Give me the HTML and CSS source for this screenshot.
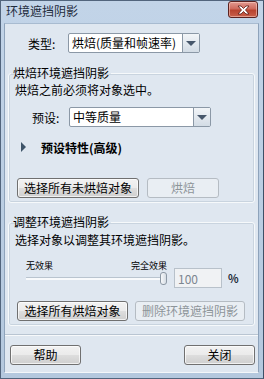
FILE: index.html
```html
<!DOCTYPE html>
<html lang="zh-CN">
  <head>
    <meta charset="UTF-8" />
    <meta name="viewport" content="width=device-width, initial-scale=1.0" />
    <title>环境遮挡阴影</title>

    <link rel="stylesheet" href="styles.css">
  </head>
  <body>
    <div class="window">
      <div class="titlebar">
        <span class="title">环境遮挡阴影</span>
        <button class="close-btn" aria-label="关闭">
          <svg width="15" height="10" viewBox="0 0 15 10">
            <path d="M2 1 L5 1 L7.5 3.5 L10 1 L13 1 L9.5 5 L13 9 L10 9 L7.5 6.5 L5 9 L2 9 L5.5 5 Z"
                  fill="#fff" stroke="#5b1a14" stroke-width="0.8" stroke-linejoin="round" />
          </svg>
        </button>
      </div>

      <div class="content">
        <div class="type-row">
          <label class="type-label">类型:</label>
          <div class="combo type-combo">
            <span class="combo-text">烘焙(质量和帧速率)</span>
            <span class="combo-arrow"><span class="tri"></span></span>
          </div>
        </div>

        <fieldset class="group bake-group">
          <legend>烘焙环境遮挡阴影</legend>
          <div class="note">烘焙之前必须将对象选中。</div>

          <div class="preset-row">
            <label class="preset-label">预设:</label>
            <div class="combo preset-combo">
              <span class="combo-text">中等质量</span>
              <span class="combo-arrow"><span class="tri"></span></span>
            </div>
          </div>

          <div class="advanced">
            <span class="expander"></span>
            <span class="advanced-text">预设特性(高级)</span>
          </div>

          <div class="btn-row">
            <button class="btn btn-select-unbaked">选择所有未烘焙对象</button>
            <button class="btn btn-bake" disabled>烘焙</button>
          </div>
        </fieldset>

        <fieldset class="group adjust-group">
          <legend>调整环境遮挡阴影</legend>
          <div class="note">选择对象以调整其环境遮挡阴影。</div>

          <div class="slider-row">
            <div class="slider-col">
              <div class="slider-labels">
                <span>无效果</span>
                <span>完全效果</span>
              </div>
              <div class="slider">
                <div class="track"></div>
                <div class="thumb"></div>
              </div>
            </div>
            <input class="value-field" type="text" value="100" disabled />
            <span class="percent">%</span>
          </div>

          <div class="btn-row">
            <button class="btn btn-select-baked">选择所有烘焙对象</button>
            <button class="btn btn-delete" disabled>删除环境遮挡阴影</button>
          </div>
        </fieldset>

        <div class="separator"></div>

        <div class="footer">
          <button class="btn btn-footer">帮助</button>
          <button class="btn btn-footer">关闭</button>
        </div>
      </div>
    </div>
  </body>
</html>
```

FILE: styles.css
```css
* {
  box-sizing: border-box;
}

body {
  margin: 0;
  font-family: "Noto Sans CJK SC", "Liberation Sans", sans-serif;
  font-size: 12px;
  color: #000;
  background: #9fb4cc;
}

.window {
  width: 264px;
  height: 379px;
  background: linear-gradient(#c2d4e8, #b4c8de);
  border: 1px solid #52657d;
  border-right-color: #3d4f66;
  padding: 0 4px 5px 3px;
  display: flex;
  flex-direction: column;
}

.titlebar {
  height: 26px;
  display: flex;
  align-items: center;
  justify-content: space-between;
  padding-left: 2px;
  padding-right: 1px;
}

.title {
  font-size: 12px;
  line-height: 14px;
  color: #1e2b3c;
  margin-top: -2px;
}

.close-btn {
  width: 30px;
  height: 17px;
  margin-top: -5px;
  border: 1px solid #5b2220;
  border-radius: 3px;
  background: linear-gradient(#e29a90 0%, #cf6a5d 45%, #b8432f 55%, #c9604b 100%);
  box-shadow: inset 0 0 0 1px rgba(255, 220, 210, 0.5);
  display: flex;
  align-items: center;
  justify-content: center;
  padding: 0;
}

.content {
  flex: 1;
  background: #dfe7f0;
  border: 1px solid #8ea3bb;
  border-top-color: #a8bbd0;
  border-bottom-color: #f4f7fa;
  padding: 9px 0 7px;
  display: flex;
  flex-direction: column;
}

.type-row {
  display: flex;
  align-items: center;
  padding-left: 23px;
  height: 20px;
}

.type-label {
  width: 40px;
}

.combo {
  height: 20px;
  background: #fff;
  border: 1px solid #8b98a6;
  border-radius: 2px;
  display: flex;
  align-items: center;
}

.combo-text {
  flex: 1;
  padding-left: 3px;
  line-height: 16px;
  white-space: nowrap;
  overflow: hidden;
}

.combo-arrow {
  width: 17px;
  height: 18px;
  border-left: 1px solid #8b98a6;
  background: linear-gradient(#f2f5f8, #d3dce5);
  display: flex;
  align-items: center;
  justify-content: center;
}

.tri {
  width: 0;
  height: 0;
  border-left: 5px solid transparent;
  border-right: 5px solid transparent;
  border-top: 5px solid #47576b;
}

.type-combo {
  width: 132px;
}

.group {
  margin: 13px 3px 0;
  border: 1px solid #f6f9fb;
  border-radius: 3px;
  box-shadow: inset 0 0 0 1px #c9d4df;
  padding: 0 6px;
}

.group legend {
  padding: 0 2px;
  margin-left: -4px;
  line-height: 14px;
}

.note {
  line-height: 16px;
  white-space: nowrap;
}

.bake-group .note {
  margin-top: 2px;
}

.preset-row {
  display: flex;
  align-items: center;
  margin-top: 9px;
  padding-left: 17px;
}

.preset-label {
  width: 37px;
}

.preset-combo {
  width: 142px;
}

.advanced {
  display: flex;
  align-items: center;
  margin-top: 12px;
  height: 16px;
  padding-left: 6px;
}

.expander {
  width: 0;
  height: 0;
  border-top: 5px solid transparent;
  border-bottom: 5px solid transparent;
  border-left: 5px solid #3e5469;
}

.advanced-text {
  font-weight: bold;
  margin-left: 15px;
}

.btn-row {
  display: flex;
  gap: 8px;
  margin-top: 23px;
  padding-left: 2px;
  padding-bottom: 4px;
}

.btn {
  height: 20px;
  font-family: inherit;
  font-size: 12px;
  line-height: 16px;
  padding: 0;
  color: #000;
  border: 1px solid #707070;
  border-radius: 3px;
  background: linear-gradient(#f2f2f2 0%, #ebebeb 48%, #dddddd 52%, #cfcfcf 100%);
  box-shadow: inset 0 0 0 1px rgba(255, 255, 255, 0.7);
  white-space: nowrap;
  overflow: hidden;
}

.btn:disabled {
  color: #8d9499;
  border-color: #b5bcc3;
  background: #e9eef3;
  box-shadow: none;
}

.btn-select-unbaked {
  width: 122px;
}

.btn-bake {
  width: 72px;
}

.adjust-group {
  margin-top: 12px;
}

.adjust-group .note {
  line-height: 14px;
  margin-top: 4px;
}

.slider-row {
  display: flex;
  align-items: flex-end;
  margin-top: 13px;
  padding-left: 11px;
}

.slider-col {
  width: 141px;
}

.slider-labels {
  display: flex;
  justify-content: space-between;
  font-size: 9px;
  line-height: 11px;
  margin-bottom: -3px;
}

.slider {
  position: relative;
  height: 20px;
}

.track {
  position: absolute;
  left: 0;
  right: 0;
  top: 9px;
  height: 3px;
  background: #f8fafc;
  border-top: 1px solid #b9c4cf;
}

.thumb {
  position: absolute;
  right: 0;
  top: 4px;
  width: 7px;
  height: 13px;
  border: 1px solid #8c98a4;
  border-radius: 3px;
  background: linear-gradient(90deg, #f6f8fa, #d6dde4);
}

.value-field {
  width: 48px;
  height: 20px;
  margin-left: 7px;
  border: 1px solid #b8c1ca;
  background: #f0f2f4;
  font-family: inherit;
  font-size: 12px;
  color: #7c8690;
  padding: 0 0 0 3px;
}

.percent {
  font-size: 11px;
  font-weight: bold;
  color: #1d2a38;
  margin-left: 6px;
  line-height: 20px;
}

.adjust-group .btn-row {
  margin-top: 13px;
  gap: 7px;
  padding-bottom: 4px;
}

.btn-select-baked {
  width: 111px;
}

.btn-delete {
  width: 110px;
}

.separator {
  margin-top: 8px;
  height: 2px;
  border-top: 1px solid #b9c5d2;
  border-bottom: 1px solid #f7f9fb;
}

.footer {
  display: flex;
  justify-content: space-between;
  margin-top: 9px;
  padding: 0 3px 0 5px;
}

.btn-footer {
  width: 71px;
}
```
